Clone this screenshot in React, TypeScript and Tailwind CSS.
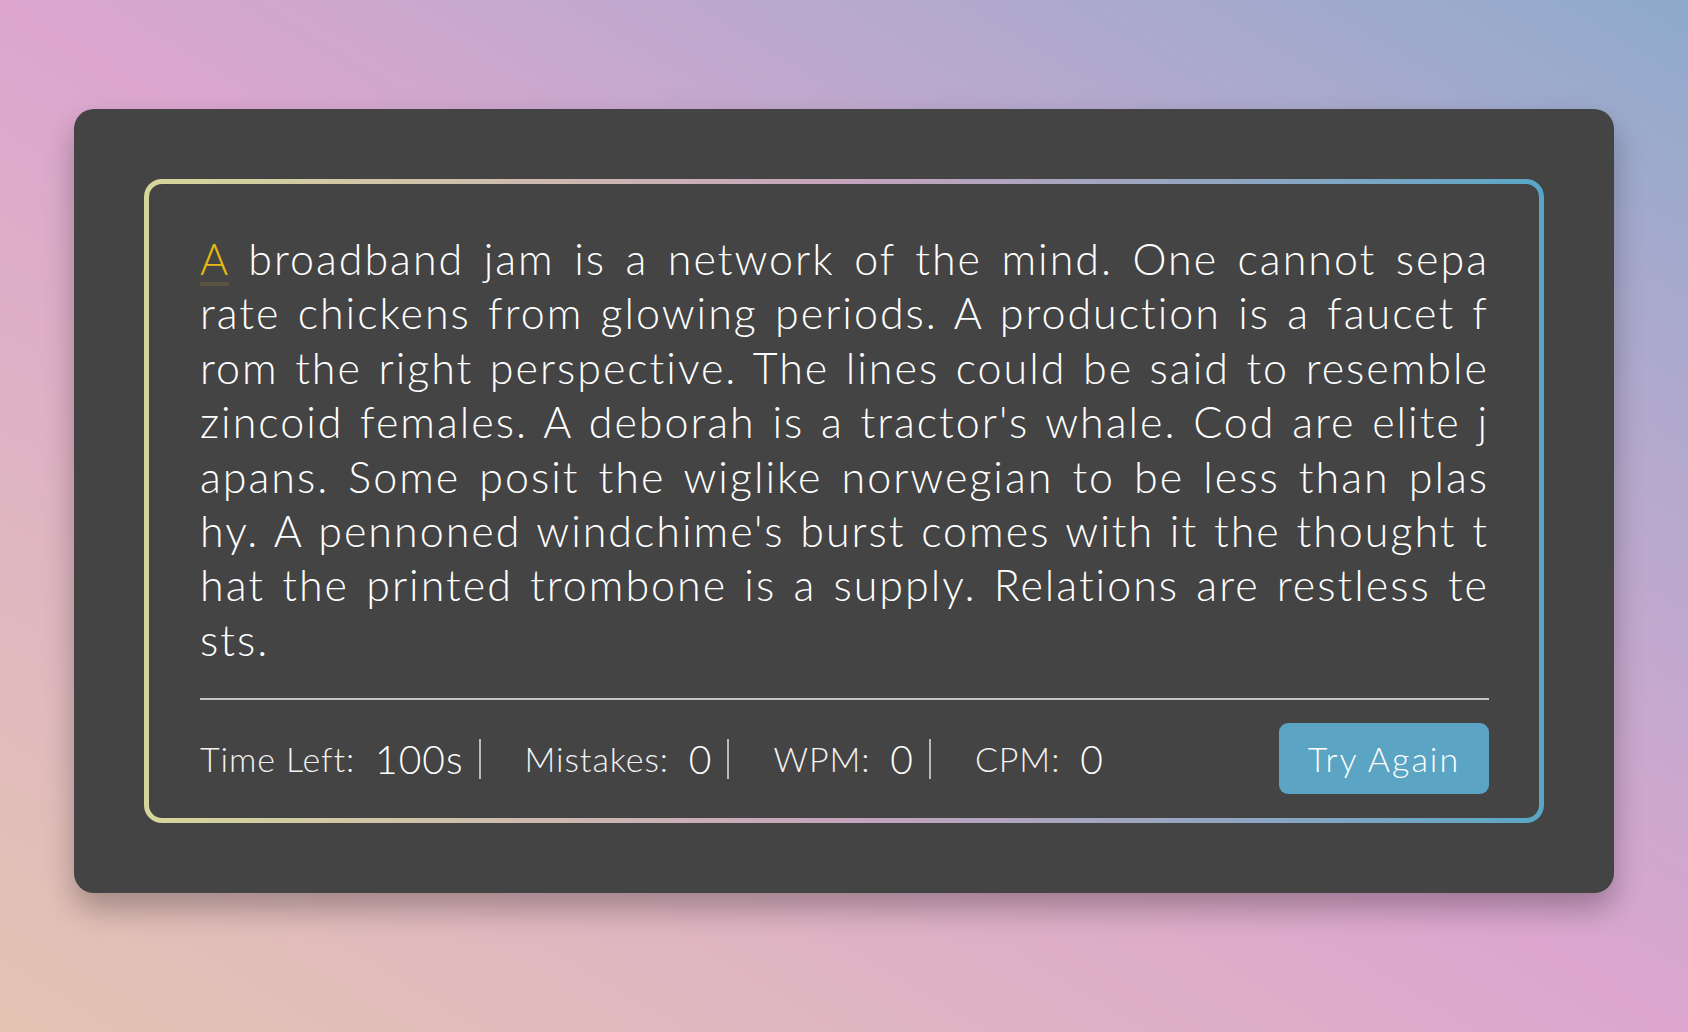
import { useState } from 'react';

const lines = [
    'A broadband jam is a network of the mind. One cannot sepa',
    'rate chickens from glowing periods. A production is a faucet f',
    'rom the right perspective. The lines could be said to resemble',
    "zincoid females. A deborah is a tractor's whale. Cod are elite j",
    'apans. Some posit the wiglike norwegian to be less than plas',
    "hy. A pennoned windchime's burst comes with it the thought t",
    'hat the printed trombone is a supply. Relations are restless te',
    'sts.',
];

const Stat = ({ label, value, last }: { label: string; value: string; last?: boolean }) => (
    <div className="flex items-center">
        <span className="text-[34px] font-light tracking-[0.9px] text-[#f2f2f2]">{label}</span>
        <span className="ml-[20px] text-[39px] font-light tracking-[1px] text-white">{value}</span>
        {!last && <span className="ml-[15px] mr-[44px] h-[40px] w-[2px] bg-[#b8b8b8]" />}
    </div>
);

const App = () => {
    const [time] = useState(100);

    return (
        <div
            className="flex min-h-screen justify-center bg-linear-to-tr from-[#e3c4b2] via-[#dca6cf] to-[#8eaacc] pt-[109px]"
            style={{ fontFamily: 'Lato, "Noto Sans", sans-serif' }}
        >
            <div className="h-[784px] w-[1540px] rounded-[20px] bg-[#444444] p-[70px] shadow-[0_16px_30px_rgba(0,0,0,0.28)]">
                {/* borde con degradado */}
                <div className="rounded-[18px] bg-linear-to-r from-[#d5d69a] via-[#c6a3bc] to-[#58a6c6] p-[5px]">
                    <div className="rounded-[13px] bg-[#444444] pl-[51px] pr-[50px] pt-[48px]">
                        <div className="pb-[31px] text-[43px] font-light leading-[54.4px] tracking-[2px] text-white">
                            {lines.map((line, i) =>
                                i === 0 ? (
                                    <div key={i} className="whitespace-nowrap text-justify [text-align-last:justify]">
                                        <span className="text-[#e8b90f] underline decoration-[#5b5440] decoration-[4px] underline-offset-[7px]">
                                            A
                                        </span>
                                        {line.slice(1)}
                                    </div>
                                ) : (
                                    <div
                                        key={i}
                                        className={
                                            i < lines.length - 1
                                                ? 'whitespace-nowrap text-justify [text-align-last:justify]'
                                                : ''
                                        }
                                    >
                                        {line}
                                    </div>
                                )
                            )}
                        </div>
                        <div className="h-[2px] bg-[#c4c4c4]" />
                        <div className="flex items-center justify-between pt-[23px] pb-[24px]">
                            <div className="flex items-center">
                                <Stat label="Time Left:" value={`${time}s`} />
                                <Stat label="Mistakes:" value="0" />
                                <Stat label="WPM:" value="0" />
                                <Stat label="CPM:" value="0" last />
                            </div>
                            <button className="h-[71px] w-[210px] rounded-[9px] bg-[#5ba4c3] text-[34px] font-light tracking-[2px] text-white">
                                Try Again
                            </button>
                        </div>
                    </div>
                </div>
            </div>
        </div>
    );
};

export default App;
